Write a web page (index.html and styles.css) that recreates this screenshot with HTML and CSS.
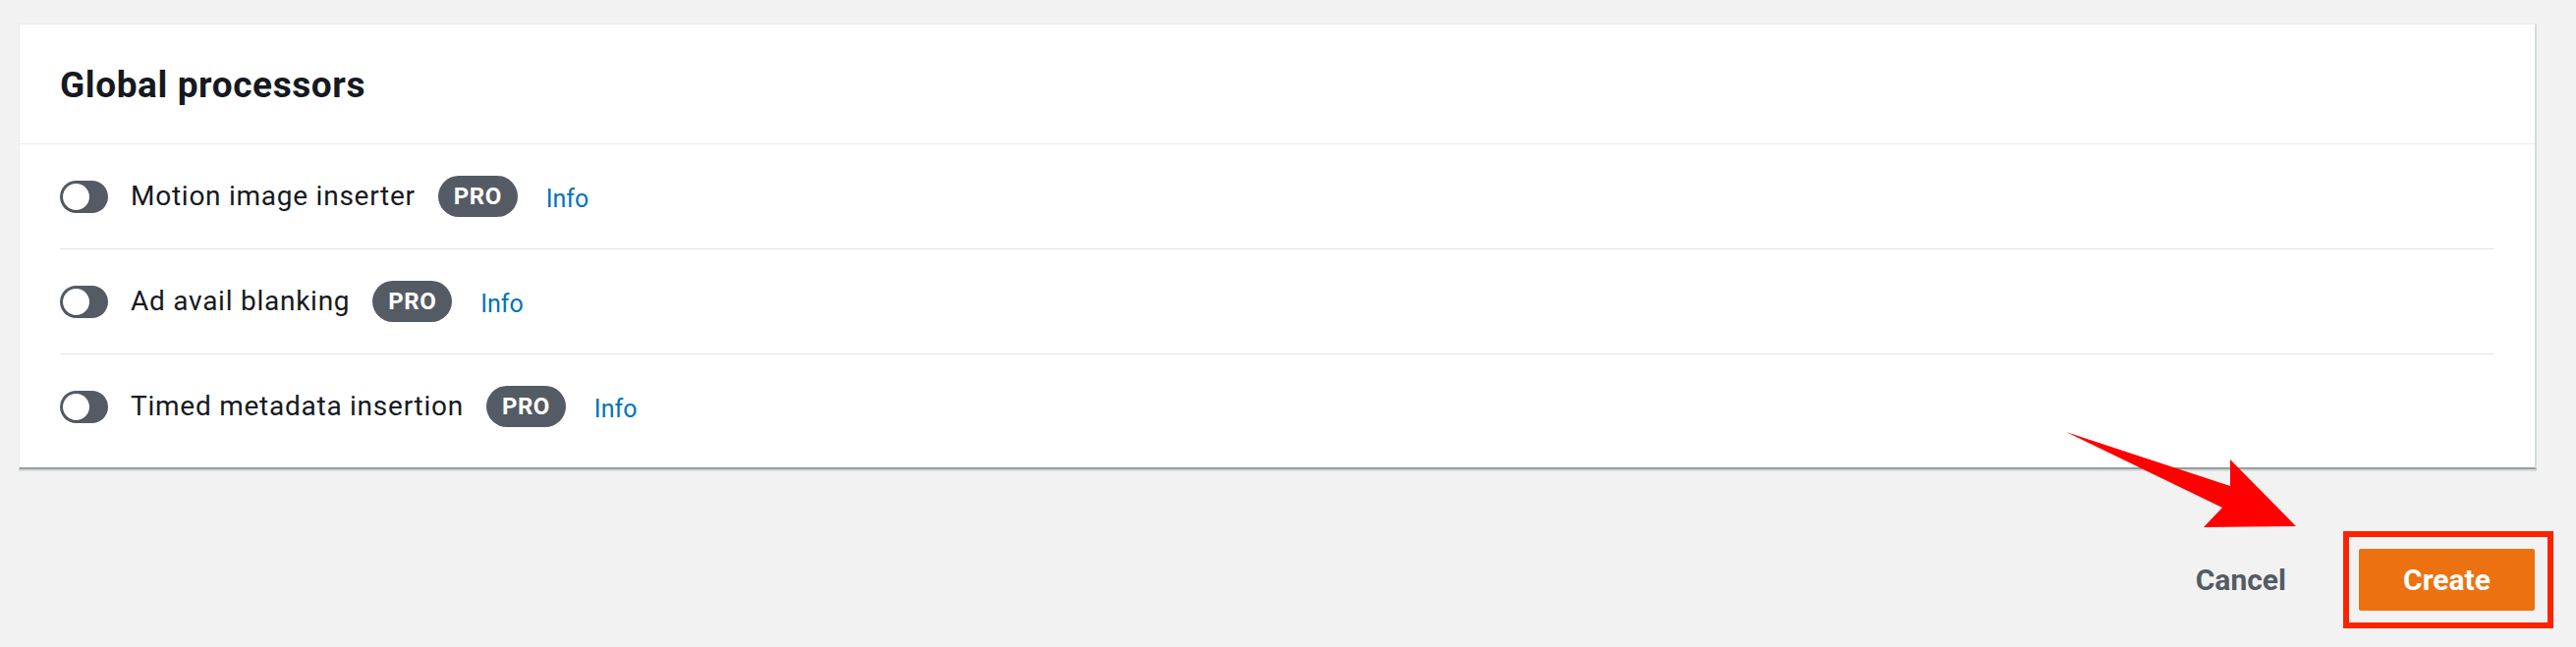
FILE: index.html
```html
<!DOCTYPE html>
<html lang="en">
<head>
<meta charset="utf-8">
<title>Global processors</title>
<link rel="stylesheet" href="styles.css">
</head>
<body>
<main class="page">
  <section class="card">
    <header class="card-header">
      <h2 class="card-title">Global processors</h2>
    </header>
    <div class="card-body">
      <div class="row">
        <span class="toggle"><span class="knob"></span></span>
        <span class="label">Motion image inserter</span>
        <span class="badge">PRO</span>
        <a class="info" href="#">Info</a>
      </div>
      <div class="row">
        <span class="toggle"><span class="knob"></span></span>
        <span class="label">Ad avail blanking</span>
        <span class="badge">PRO</span>
        <a class="info" href="#">Info</a>
      </div>
      <div class="row row-last">
        <span class="toggle"><span class="knob"></span></span>
        <span class="label">Timed metadata insertion</span>
        <span class="badge">PRO</span>
        <a class="info" href="#">Info</a>
      </div>
    </div>
  </section>
  <div class="actions">
    <button class="btn-link" type="button">Cancel</button>
    <span class="highlight">
      <button class="btn-primary" type="button">Create</button>
      <span class="highlight-box"></span>
    </span>
  </div>
  <svg class="arrow" width="250" height="110" viewBox="0 0 250 110" aria-hidden="true">
    <polygon points="8,5 175,60 175,33 242,101 148,102 167,82" fill="#ff0000"/>
  </svg>
</main>
</body>
</html>
```

FILE: styles.css
```css
html, body {
  margin: 0;
  padding: 0;
}
body {
  background: #f2f2f2;
  font-family: Roboto, "Liberation Sans", Arial, sans-serif;
  color: #16191f;
}
.page {
  position: relative;
  padding: 24px 40px 0 19px;
  height: 659px;
  box-sizing: border-box;
}
.card {
  background: #fff;
  border: 1px solid #eaeded;
  border-right: 2px solid #d5dbdb;
  border-bottom: 2px solid #979c9f;
  box-shadow: 0 2px 0 #d5dbdb;
}
.card-header {
  height: 121px;
  display: flex;
  align-items: center;
  padding: 0 40px 0 41px;
  border-bottom: 1px solid #eaeded;
}
.card-title {
  margin: 0;
  font-size: 37px;
  font-weight: 700;
  letter-spacing: 0.6px;
  line-height: 44px;
  color: #16191f;
  padding-top: 2px;
}
.card-body {
  padding: 0 42px 9px 41px;
}
.row {
  height: 107px;
  box-sizing: border-box;
  border-bottom: 1px solid #e1e4e4;
  display: flex;
  align-items: center;
}
.row-last {
  border-bottom: none;
  height: 106px;
}
.toggle {
  width: 49px;
  height: 33px;
  border-radius: 17px;
  background: #545b64;
  display: flex;
  align-items: center;
  padding-left: 3px;
  box-sizing: border-box;
  flex: none;
}
.knob {
  width: 27px;
  height: 27px;
  border-radius: 50%;
  background: #fff;
  box-shadow: 0 1px 1px rgba(0,0,0,0.25);
}
.label {
  margin-left: 23px;
  font-size: 28px;
  letter-spacing: 0.75px;
  line-height: 34px;
}
.badge {
  margin-left: 23px;
  height: 42px;
  padding: 0 16px;
  border-radius: 21px;
  background: #545b64;
  color: #fff;
  font-size: 24px;
  letter-spacing: 0.5px;
  font-weight: 700;
  display: flex;
  align-items: center;
  box-sizing: border-box;
}
.info {
  margin-left: 29px;
  font-size: 25px;
  color: #0073bb;
  text-decoration: none;
  padding-top: 4px;
}
.actions {
  margin-top: 81px;
  display: flex;
  justify-content: flex-end;
  align-items: center;
  padding-right: 2px;
}
.btn-link {
  background: none;
  border: none;
  font-family: inherit;
  font-size: 30px;
  font-weight: 700;
  color: #545b64;
  padding: 0;
  margin-right: 74px;
  line-height: 40px;
}
.highlight {
  position: relative;
  display: flex;
}
.btn-primary {
  width: 179px;
  height: 63px;
  background: #ec7211;
  border: none;
  border-radius: 2px;
  color: #fff;
  font-family: inherit;
  font-size: 30px;
  font-weight: 700;
  padding: 0;
}
.highlight-box {
  position: absolute;
  left: -16px;
  right: -19px;
  top: -18px;
  bottom: -18px;
  border: 6px solid #ff2200;
  box-sizing: border-box;
  pointer-events: none;
}
.arrow {
  position: absolute;
  left: 2095px;
  top: 435px;
}
```
